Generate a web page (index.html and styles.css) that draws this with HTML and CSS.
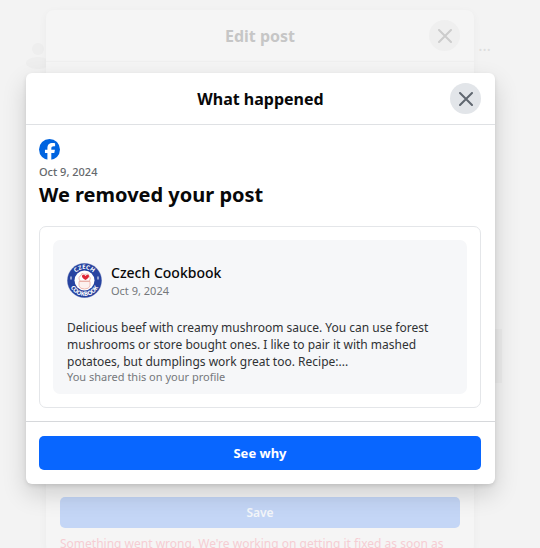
FILE: index.html
```html
<!DOCTYPE html>
<html lang="en">
<head>
<meta charset="utf-8">
<meta name="viewport" content="width=device-width, initial-scale=1">
<title>What happened</title>
<link rel="stylesheet" href="styles.css">
</head>
<body>
<main class="stage">
  <div class="page" aria-hidden="true">
    <svg class="person" viewBox="0 0 24 28"><circle cx="12" cy="7" r="6"/><ellipse cx="12" cy="21" rx="12" ry="6"/></svg>
    <span class="dots">…</span>
    <span class="strip"></span>
  </div>
  <section class="dialog edit" aria-label="Edit post">
    <header class="bar">
      <h2 class="bar-title">Edit post</h2>
      <button class="close" type="button" aria-label="Close editor">
        <svg viewBox="0 0 14 14"><path d="M1 1 13 13M13 1 1 13"/></svg>
      </button>
    </header>
    <div class="edit-body"></div>
    <div class="edit-foot">
      <button class="save" type="button">Save</button>
      <p class="error">Something went wrong. We're working on getting it fixed as soon as</p>
    </div>
  </section>
  <section class="dialog notice" role="dialog" aria-labelledby="notice-title">
    <header class="bar">
      <h1 class="bar-title" id="notice-title">What happened</h1>
      <button class="close" type="button" aria-label="Close">
        <svg viewBox="0 0 14 14"><path d="M1 1 13 13M13 1 1 13"/></svg>
      </button>
    </header>
    <div class="notice-body">
      <svg class="brand" viewBox="0 0 36 36" role="img" aria-label="Facebook">
        <circle cx="18" cy="18" r="18" fill="#0064e0"/>
        <path fill="#fff" d="M14.4 36V23.8h-4.2v-5.4h4.2v-2.2c0-6.4 2.9-9.4 9.2-9.4 1.2 0 3.200.2 4 .5v5.200c-.4 0-1.200-.1-2.200-.1-3.100 0-4.300 1.200-4.300 4.200v1.800h6.200l-1.100 5.400h-5.100V36z"/>
      </svg>
      <time class="date" datetime="2024-10-09">Oct 9, 2024</time>
      <h2 class="headline">We removed your post</h2>
      <div class="card">
        <article class="post">
          <header class="author">
            <svg class="avatar" viewBox="0 0 70 70" role="img" aria-label="Czech Cookbook logo">
              <defs>
                <path id="arc-top" d="M12 35a23 23 0 0 1 46 0"/>
                <path id="arc-bottom" d="M4 35a31 31 0 0 0 62 0"/>
              </defs>
              <circle cx="35" cy="35" r="35" fill="#a9b3d5"/>
              <circle cx="35" cy="35" r="34" fill="#2743a0"/>
              <circle cx="35" cy="35" r="20" fill="#fff"/>
              <text class="ring"><textPath href="#arc-top" startOffset="50%">CZECH</textPath></text>
              <text class="ring"><textPath href="#arc-bottom" startOffset="50%">COOKBOOK</textPath></text>
              <path d="M8 27v6M62 27v6" stroke="#fff" stroke-width="2"/>
              <path d="M24 37h22v9q-2 6-11 6t-11-6z" fill="#fdf1ef" stroke="#e8a69c" stroke-width="1.500"/>
              <path d="M26 36q-5-8 2-11 1-7 5-3 3 2 6 0 4-2 5 4 5 3 1 10z" fill="#fff" stroke="#e6a39b" stroke-width="1.500"/>
              <path d="M37 34c-13-7-5-14 0-8 5-6 13 1 0 8z" fill="#df2636"/>
            </svg>
            <div class="who">
              <h3 class="name">Czech Cookbook</h3>
              <time class="posted" datetime="2024-10-09">Oct 9, 2024</time>
            </div>
          </header>
          <p class="text">Delicious beef with creamy mushroom sauce. You can use forest mushrooms or store bought ones. I like to pair it with mashed potatoes, but dumplings work great too. Recipe:...</p>
          <p class="shared">You shared this on your profile</p>
        </article>
      </div>
    </div>
    <footer class="notice-foot">
      <button class="primary" type="button">See why</button>
    </footer>
  </section>
</main>
</body>
</html>
```
FILE: styles.css
```css
* { box-sizing: border-box; }
body {
  margin: 0;
  background: #f3f3f3;
  color: #080809;
  font-family: "Segoe UI", "Noto Sans", sans-serif;
  overflow: hidden;
}
h1, h2, h3, p { margin: 0; }
button { font-family: inherit; border: 0; padding: 0; }
svg { display: block; }

.stage { display: grid; align-items: start; }
.page, .dialog { grid-area: 1 / 1; }

.page { position: relative; align-self: stretch; }
.person { position: absolute; left: 26px; top: 42px; width: 24px; fill: #eeeeee; }
.dots { position: absolute; right: 49px; top: 34px; font-size: 16px; color: #dedede; line-height: 22px; }
.strip { position: absolute; right: 38px; top: 329px; width: 8px; height: 54px; background: #ededed; }

.dialog { border-radius: 8px; }
.edit {
  position: relative;
  margin: 10px 66px 0 46px;
  background: #f5f5f5;
  box-shadow: 0 2px 8px rgba(0, 0, 0, .04);
}
.notice {
  position: relative;
  margin: 73px 45px 0 26px;
  background: #fff;
  border-radius: 6px;
  box-shadow: 0 10px 24px rgba(0, 0, 0, .16), 0 2px 4px rgba(0, 0, 0, .1);
}

.bar {
  display: grid;
  grid-template-columns: 31px 1fr 31px;
  align-items: center;
  height: 52px;
  padding: 0 14px;
  border-bottom: 1px solid #dfe1e4;
}
.bar-title { grid-column: 2; text-align: center; font-size: 16px; line-height: 24px; font-weight: 700; }
.close {
  display: grid;
  place-items: center;
  width: 31px;
  height: 31px;
  border-radius: 50%;
  background: #e2e5e9;
}
.close svg { width: 14px; fill: none; stroke: #606770; stroke-width: 2; stroke-linecap: round; }

.edit .bar { border-color: #f0f0f0; }
.edit .bar-title { color: #c6c6c6; }
.edit .close { background: #efefef; }
.edit .close svg { stroke: #cccccc; }
.edit-body { height: 435px; }
.edit-foot { padding: 0 14px; }
.save {
  width: 100%;
  height: 31px;
  border-radius: 5px;
  background: #c4d6f6;
  color: #f4f6fa;
  font-size: 12px;
  font-weight: 600;
}
.error { padding-top: 7px; color: #f5cdd3; font-size: 12px; line-height: 18px; }

.notice-body { padding: 14px 14px 13px 13px; }
.brand { width: 21px; height: 21px; }
.date { display: block; margin-top: 4px; color: #65686c; font-size: 11px; line-height: 16px; font-weight: 500; }
.headline { font-size: 20px; line-height: 30px; font-weight: 700; }
.card { margin-top: 16px; padding: 13px; border: 1px solid #e4e6e9; border-radius: 7px; }
.post { padding: 23px 14px 10px; border-radius: 7px; background: #f6f7f9; }
.author { display: flex; align-items: center; gap: 9px; }
.avatar { width: 35px; height: 35px; flex: none; }
.ring { fill: #fff; font-size: 12px; font-weight: 700; text-anchor: middle; }
.name { font-size: 14px; line-height: 20px; font-weight: 500; }
.posted { display: block; color: #75787c; font-size: 11px; line-height: 15px; }
.text { margin-top: 21px; color: #303234; font-size: 12px; line-height: 17px; }
.shared { color: #75787c; font-size: 11px; line-height: 14px; }

.notice-foot { padding: 14px 14px 14px 13px; border-top: 1px solid #d6d8db; }
.primary {
  display: block;
  width: 100%;
  height: 34px;
  border-radius: 5px;
  background: #0866ff;
  color: #fff;
  font-size: 13px;
  font-weight: 700;
}
```
